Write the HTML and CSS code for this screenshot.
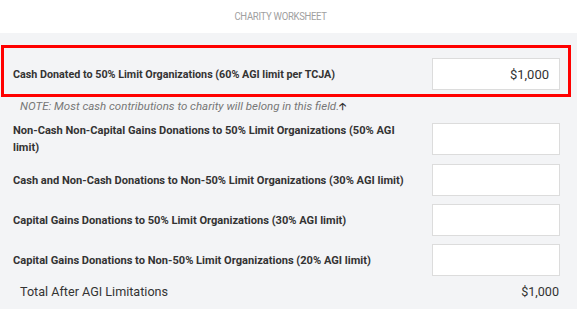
FILE: index.html
```html
<!DOCTYPE html>
<html>
<head>
<meta charset="utf-8">
<link rel="stylesheet" href="styles.css">
</head>
<body>
<div class="page">
  <header class="title"><span class="title-text">CHARITY WORKSHEET</span></header>
  <main class="sheet">
    <div class="row highlight">
      <div class="label">Cash Donated to 50% Limit Organizations (60% AGI limit per TCJA)</div>
      <div class="field">$1,000</div>
    </div>
    <p class="note">NOTE: Most cash contributions to charity will belong in this field.<span class="arrow">&#129121;</span></p>
    <div class="rows">
      <div class="row">
        <div class="label">Non-Cash Non-Capital Gains Donations to 50% Limit Organizations (50% AGI limit)</div>
        <div class="field"></div>
      </div>
      <div class="row">
        <div class="label">Cash and Non-Cash Donations to Non-50% Limit Organizations (30% AGI limit)</div>
        <div class="field"></div>
      </div>
      <div class="row">
        <div class="label">Capital Gains Donations to 50% Limit Organizations (30% AGI limit)</div>
        <div class="field"></div>
      </div>
      <div class="row">
        <div class="label">Capital Gains Donations to Non-50% Limit Organizations (20% AGI limit)</div>
        <div class="field"></div>
      </div>
    </div>
    <div class="total">
      <span>Total After AGI Limitations</span>
      <span>$1,000</span>
    </div>
  </main>
</div>
</body>
</html>
```

FILE: styles.css
```css
* { box-sizing: border-box; }
html, body { margin: 0; padding: 0; }
body {
  font-family: Roboto, "Liberation Sans", sans-serif;
  color: #333;
  background: #f3f4f6;
}
.page { width: 577px; height: 309px; overflow: hidden; background: #f3f4f6; }
.title {
  height: 33px;
  background: #fff;
  display: flex;
  align-items: center;
  justify-content: center;
  padding-right: 16px;
}
.title-text {
  font-size: 10px;
  color: #a0a0a0;
  letter-spacing: -0.3px;
  display: inline-block;
  transform: scaleX(0.95);
}
.sheet { padding-top: 12px; }
.row {
  display: flex;
  align-items: center;
  justify-content: space-between;
  padding-left: 13px;
  padding-right: 17px;
}
.label {
  font-size: 11.1px;
  font-weight: 700;
  line-height: 17px;
  width: 395px;
  color: #333;
}
.field {
  width: 128px;
  height: 32px;
  background: #fff;
  border: 1.5px solid #dcdcdc;
  font-size: 13px;
  color: #333;
  display: flex;
  align-items: center;
  justify-content: flex-end;
  padding-right: 10px;
  flex: none;
}
.highlight {
  margin-left: 1px;
  width: 570px;
  border: 3px solid #f00;
  padding: 10px 8px 4px 9px;
}
.highlight .label { font-size: 10.75px; }
.note {
  margin: 0 0 7px;
  padding-left: 20px;
  height: 18px;
  line-height: 18px;
  font-size: 11.5px;
  font-style: italic;
  color: #777;
}
.arrow { font-style: normal; font-weight: 700; color: #333; font-size: 10px; }
.rows { display: flex; flex-direction: column; gap: 8px; }
.total {
  display: flex;
  justify-content: space-between;
  align-items: center;
  height: 20px;
  margin-top: 5px;
  padding-left: 20px;
  padding-right: 18px;
  font-size: 12.6px;
  color: #333;
}
```
